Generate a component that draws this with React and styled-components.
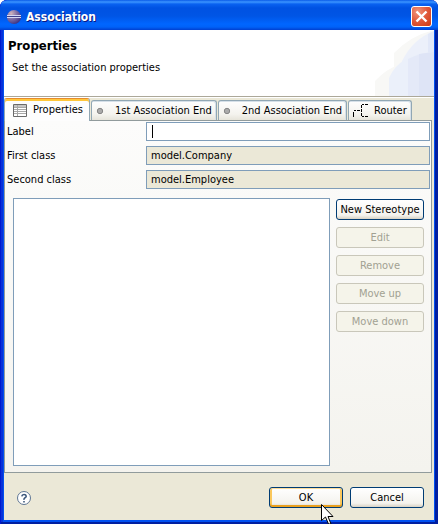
import React from "react";
import styled, { createGlobalStyle, css } from "styled-components";

const GlobalStyle = createGlobalStyle`
  * {
    box-sizing: border-box;
  }

  body {
    margin: 0;
    background: white;
    color: black;
    font-family: "DejaVu Sans Condensed", "DejaVu Sans", sans-serif;
    font-size: 11px;
    line-height: 14px;
  }
`;

const Window = styled.main`
  display: flex;
  flex-direction: column;
  min-height: 100vh;
  padding: 0 4px 4px;
  overflow: hidden;
  border-radius: 7px 7px 0 0;
  background: #0050f0;
  box-shadow: inset 1px 0 #0019cf, inset -3px -2px #001ea0,
    inset 3px 0 #0831d9;
`;

const TitleBar = styled.header`
  display: flex;
  align-items: center;
  gap: 5px;
  height: 30px;
  margin: 0 -4px;
  padding: 3px 6px 0 7px;
  border-radius: 7px 7px 0 0;
  background: linear-gradient(
    #0a5be8 0,
    #3c95ff 2px,
    #0a62f0 4px,
    #0052e2 8px,
    #0055e5 16px,
    #0066ff 24px,
    #0062f8 27px,
    #003fd0 30px
  );
`;

const WindowTitle = styled.h1`
  flex: 1;
  margin: 0;
  color: white;
  font-size: 12px;
  line-height: 16px;
  text-shadow: 1px 1px #0a1883;
`;

const CloseButton = styled.button`
  display: flex;
  align-items: center;
  justify-content: center;
  width: 21px;
  height: 21px;
  padding: 0;
  border: 1px solid white;
  border-radius: 3px;
  background: radial-gradient(circle at 30% 25%, #f0957c, #e0583a 50%, #cc3a12);
`;

const Banner = styled.section`
  display: flex;
  justify-content: space-between;
  height: 67px;
  border-bottom: 1px solid #aca899;
  background: white;
`;

const BannerText = styled.div`
  padding: 8px 4px;
`;

const BannerTitle = styled.h2`
  margin: 0;
  font-size: 13px;
  line-height: 16px;
`;

const BannerMessage = styled.p`
  margin: 7px 0 0 4px;
`;

const Body = styled.div`
  display: flex;
  flex: 1;
  flex-direction: column;
  border-top: 1px solid white;
  background: #ebe8d7;
`;

const TabList = styled.div`
  display: flex;
  align-items: flex-end;
  gap: 1px;
  height: 22px;
`;

const Tab = styled.button`
  display: flex;
  align-items: center;
  gap: ${(props) => props.$gap || 6}px;
  height: 20px;
  padding: 0 4px;
  border: 1px solid #91a7b4;
  border-bottom: none;
  border-radius: 3px 3px 0 0;
  background: linear-gradient(#fefefe, #f4f3ee 70%, #e6e4da);
  box-shadow: inset -1px 1px #d6e0e8;
  color: black;
  font: inherit;
  white-space: nowrap;

  ${(props) =>
    props.$active &&
    css`
      height: 23px;
      margin-bottom: -1px;
      padding: 0 6px 0 8px;
      border-top: 1px solid #e68b2c;
      background: #fdfdfd;
      box-shadow: inset 0 2px #ffc73c;
      z-index: 1;
    `}
`;

const Panel = styled.form`
  display: flex;
  flex: 1;
  flex-direction: column;
  gap: 9px;
  margin-right: 2px;
  padding: 1px 1px 6px 2px;
  border: 1px solid #919b9c;
  background: linear-gradient(#fcfcfb, #f4f3ee);
`;

const Fields = styled.div`
  display: grid;
  grid-template-columns: 134px 1fr;
  align-items: center;
  gap: 5px;
`;

/* The insertion bar stands in the box for as long as it is empty. */
const Input = styled.input`
  width: 100%;
  height: 19px;
  padding: 0 4px;
  border: 1px solid #7f9db9;
  border-radius: 0;
  outline: none;
  background: ${(props) => (props.readOnly ? "#ebe8d7" : "white")};
  font: inherit;

  &:placeholder-shown {
    background: linear-gradient(black, black) 5px 2px / 1px 13px no-repeat white;
    caret-color: transparent;
  }
`;

const Stereotypes = styled.div`
  display: flex;
  flex: 1;
  gap: 6px;
  padding: 0 6px;
`;

const StereotypeList = styled.div`
  flex: 1;
  border: 1px solid #7f9db9;
  background: white;
`;

const Actions = styled.div`
  display: flex;
  flex-direction: column;
  gap: 7px;
  width: 88px;
  padding-top: 1px;
`;

const Button = styled.button`
  width: ${(props) => props.$width || "100%"};
  height: 21px;
  padding: 0;
  border: 1px solid #003c74;
  border-radius: 3px;
  background: linear-gradient(#ffffff, #f4f3ee 80%, #d8d2c4);
  color: black;
  font: inherit;
  white-space: nowrap;

  &:disabled {
    border-color: #c9c7ba;
    background: #f5f4ea;
    color: #a1a192;
  }

  ${(props) =>
    props.$hot &&
    css`
      box-shadow: inset 0 1px #fddc9a, inset 0 -2px #e8a020,
        inset 2px 0 #fac75c, inset -2px 0 #fac75c;
    `}
`;

const Footer = styled.footer`
  display: flex;
  align-items: center;
  gap: 7px;
  height: 47px;
  padding: 2px 10px 0 12px;
`;

const HelpButton = styled.button`
  display: flex;
  margin-right: auto;
  padding: 0;
  border: none;
  background: none;
`;

const Pointed = styled.div`
  position: relative;
  display: flex;
`;

const Pointer = styled.svg`
  position: absolute;
  top: 17px;
  left: 52px;
  pointer-events: none;
`;

const EclipseIcon = () => (
  <svg width="14" height="14" viewBox="0 0 14 14" aria-hidden="true">
    <defs>
      <radialGradient id="ball" cx="30%" cy="25%" r="85%">
        <stop offset="0" stopColor="#d0b4bc" />
        <stop offset="0.45" stopColor="#8273a8" />
        <stop offset="1" stopColor="#352c80" />
      </radialGradient>
    </defs>
    <circle cx="7" cy="7" r="7" fill="url(#ball)" />
    <path d="M0 5.5h14M0 7.5h14" stroke="#d3d8f4" />
    <path d="M0 6.5h14" stroke="#40408c" />
  </svg>
);

const BannerArt = () => (
  <svg width="60" height="66" viewBox="0 0 60 66" aria-hidden="true">
    <path d="M20 66V23Q36 6 60 0V66Z" fill="#f8f8f6" />
    <path d="M1 66V51Q12 39 28 33V66Z" fill="#f8f8f6" />
    <path d="M28 66V31Q39 9 60 1V66Z" fill="#ecf0fa" />
    <path d="M54 66V4L60 1V66Z" fill="#e2e8f8" />
    <path d="M15 66V48Q25 24 60 22V66Z" fill="#ebf0fa" />
    <path d="M34 66V29Q45 23 60 22V66Z" fill="#e4e9f8" />
    <path d="M45 66V24L60 22V66Z" fill="#dee4f6" />
  </svg>
);

const TableIcon = () => (
  <svg width="14" height="13" viewBox="0 0 14 13" aria-hidden="true">
    <path d="M.5 .5h13v12H.5z" fill="white" stroke="#6a6a6a" />
    <path d="M1 1h12v2H1z" fill="#c4c4c4" />
    <path d="M1 3.5h12M1 5.5h12M1 7.5h12M1 9.5h12M4.5 1v11" stroke="#a8a8a8" />
  </svg>
);

const DotIcon = () => (
  <svg width="8" height="8" viewBox="0 0 8 8" aria-hidden="true">
    <circle cx="4" cy="4" r="2.7" fill="#aaa" stroke="#858585" />
  </svg>
);

const RouterIcon = () => (
  <svg width="15" height="15" viewBox="0 0 15 15" aria-hidden="true">
    <path
      d="M.5 14V9M1 7.5H3M4 7.5H7M8.5 2V5M8.5 6V9M8.5 10V13M9 1.5h2M12 1.5h3M9 13.5h2M12 13.5h3"
      fill="none"
      stroke="black"
    />
  </svg>
);

const App = () => {
  return (
    <>
      <GlobalStyle />
      <Window>
        <TitleBar>
          <EclipseIcon />
          <WindowTitle>Association</WindowTitle>
          <CloseButton type="button" aria-label="Close">
            <svg width="13" height="13" viewBox="0 0 13 13" aria-hidden="true">
              <path d="M1.5 1.5l10 10M11.5 1.5l-10 10" stroke="white" strokeWidth="2.4" />
            </svg>
          </CloseButton>
        </TitleBar>
        <Banner>
          <BannerText>
            <BannerTitle>Properties</BannerTitle>
            <BannerMessage>Set the association properties</BannerMessage>
          </BannerText>
          <BannerArt />
        </Banner>
        <Body>
          <TabList role="tablist">
            <Tab type="button" role="tab" aria-selected="true" $active>
              <TableIcon />
              Properties
            </Tab>
            <Tab type="button" role="tab" aria-selected="false" $gap={11}>
              <DotIcon />
              1st Association End
            </Tab>
            <Tab type="button" role="tab" aria-selected="false" $gap={11}>
              <DotIcon />
              2nd Association End
            </Tab>
            <Tab type="button" role="tab" aria-selected="false">
              <RouterIcon />
              Router
            </Tab>
          </TabList>
          <Panel onSubmit={(e) => e.preventDefault()}>
            <Fields>
              <label htmlFor="label">Label</label>
              <Input id="label" placeholder=" " />
              <label htmlFor="first">First class</label>
              <Input id="first" defaultValue="model.Company" readOnly />
              <label htmlFor="second">Second class</label>
              <Input id="second" defaultValue="model.Employee" readOnly />
            </Fields>
            <Stereotypes>
              <StereotypeList role="listbox" aria-label="Stereotypes" />
              <Actions>
                <Button type="button">New Stereotype</Button>
                <Button type="button" disabled>Edit</Button>
                <Button type="button" disabled>Remove</Button>
                <Button type="button" disabled>Move up</Button>
                <Button type="button" disabled>Move down</Button>
              </Actions>
            </Stereotypes>
          </Panel>
          <Footer>
            <HelpButton type="button" aria-label="Help">
              <svg width="16" height="16" viewBox="0 0 16 16" aria-hidden="true">
                <circle cx="8" cy="8" r="6.5" fill="white" stroke="#5f7694" />
                <path d="M5.8 6.3Q6 4.5 8 4.5T10.2 6.2Q10.2 7.2 9 7.8T8 9.8M8 11v1.4" fill="none" stroke="#3d587c" strokeWidth="1.6" />
              </svg>
            </HelpButton>
            <Pointed>
              <Button type="button" $width="74px" $hot>OK</Button>
              <Pointer width="13" height="21" viewBox="0 0 13 21" aria-hidden="true">
                <path d="M.5 .5V16.5L4.5 13L7.5 20H10L7 12.5H12Z" fill="white" stroke="black" />
              </Pointer>
            </Pointed>
            <Button type="button" $width="74px">Cancel</Button>
          </Footer>
        </Body>
      </Window>
    </>
  );
};

export default App;
